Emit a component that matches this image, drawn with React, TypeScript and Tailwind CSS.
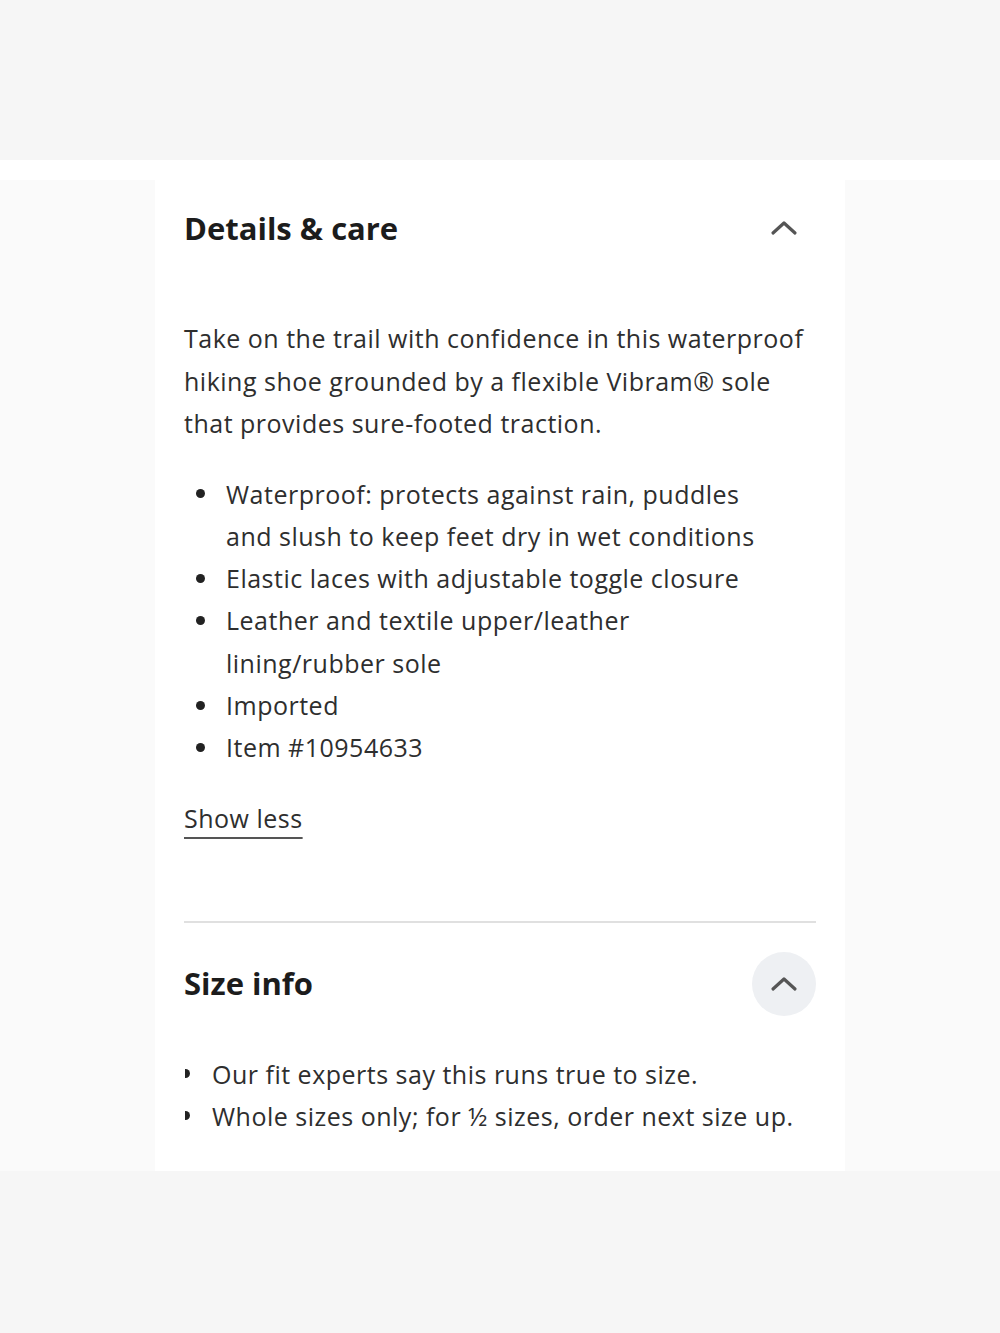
import React from "react";

const features = [
  ["Waterproof: protects against rain, puddles", "and slush to keep feet dry in wet conditions"],
  ["Elastic laces with adjustable toggle closure"],
  ["Leather and textile upper/leather", "lining/rubber sole"],
  ["Imported"],
  ["Item #10954633"],
];

const sizeNotes = [
  "Our fit experts say this runs true to size.",
  "Whole sizes only; for \u00BD sizes, order next size up.",
];

const Chevron = () => (
  <svg width="28" height="16" viewBox="0 0 28 16" fill="none">
    <path d="M3 13 L14 3 L25 13" stroke="#555" strokeWidth="3.2" strokeLinecap="round" strokeLinejoin="round" />
  </svg>
);

const App = () => {
  return (
    <div className="min-h-[1333px] bg-[#f6f6f6] font-['Open_Sans',sans-serif] text-[#2e2e2e]">
      {/* top spacer */}
      <div className="h-[160px]" />
      <div className="bg-white pt-5">
        <div className="flex">
          <div className="w-[155px] shrink-0 bg-[#fafafa]" />
          {/* card */}
          <div className="w-[690px] shrink-0 bg-white px-[29px] pt-4 pb-[34px]">
            {/* details header */}
            <div className="flex h-16 items-center justify-between">
              <h2 className="text-[31px] font-bold text-[#1c1c1c]">Details &amp; care</h2>
              <button className="flex h-16 w-16 items-center justify-center">
                <Chevron />
              </button>
            </div>
            {/* description */}
            <p className="mt-[57px] text-[25px] leading-[42.5px] tracking-[0.02em]">
              Take on the trail with confidence in this waterproof
              <br />
              hiking shoe grounded by a flexible Vibram® sole
              <br />
              that provides sure-footed traction.
            </p>
            <ul className="mt-7">
              {features.map((lines, i) => (
                <li key={i} className="flex text-[25px] leading-[42.3px] tracking-[0.02em]">
                  <span className="flex h-[42.3px] w-[42px] shrink-0 items-center pl-[12px]">
                    <span className="h-[9px] w-[9px] rounded-full bg-[#222]" />
                  </span>
                  <span>
                    {lines.map((l, j) => (
                      <span key={j} className="block">
                        {l}
                      </span>
                    ))}
                  </span>
                </li>
              ))}
            </ul>
            <button className="mt-7 text-[25px] leading-[42px] tracking-[0.02em] underline decoration-[#555] decoration-2 underline-offset-[9px]">
              Show less
            </button>
            {/* divider */}
            <div className="mt-[82px] border-t-2 border-[#e0e0e0]" />
            {/* size info header */}
            <div className="mt-[29px] flex h-16 items-center justify-between">
              <h2 className="text-[31px] font-bold text-[#1c1c1c]">Size info</h2>
              <button className="flex h-16 w-16 items-center justify-center rounded-full bg-[#eef0f3]">
                <Chevron />
              </button>
            </div>
            <ul className="mt-[37px]">
              {sizeNotes.map((n) => (
                <li key={n} className="flex text-[25px] leading-[42px] tracking-[0.02em]">
                  <span className="flex h-[42px] w-[28px] shrink-0 items-center pl-px">
                    <span className="h-[9px] w-[5px] rounded-r-full bg-[#222]" />
                  </span>
                  <span>{n}</span>
                </li>
              ))}
            </ul>
          </div>
          <div className="flex-1 bg-[#fafafa]" />
        </div>
      </div>
    </div>
  );
};

export default App;
